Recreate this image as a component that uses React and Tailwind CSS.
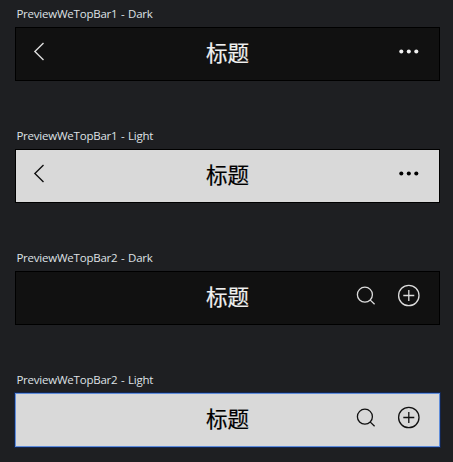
const themes = {
  dark: "bg-[#111111] text-[#dcdcdc] border-black",
  light: "bg-[#d9d9d9] text-[#111111] border-black",
  selected: "bg-[#d9d9d9] text-[#111111] border-[#5f8ddb] outline outline-[#14264f]",
};

const titles = {
  dark: "text-[#f0f0f0]",
  light: "text-black",
  selected: "text-black",
};

function Back() {
  return (
    <svg className="block h-6 w-6" viewBox="0 0 24 24" fill="none" stroke="currentColor" strokeWidth="1.4">
      <path d="M15.500 3 6.900 11.500l8.600 8.500" />
    </svg>
  );
}

function More() {
  return (
    <svg className="block h-6 w-6" viewBox="0 0 24 24" fill="currentColor">
      <circle cx="4.300" cy="11.500" r="2.050" />
      <circle cx="11.800" cy="11.500" r="2.050" />
      <circle cx="19.300" cy="11.500" r="2.050" />
    </svg>
  );
}

function Search() {
  return (
    <svg className="block h-6 w-6" viewBox="0 0 24 24" fill="none" stroke="currentColor" strokeWidth="1.3">
      <circle cx="10.900" cy="10.700" r="7.500" />
      <path d="m16.100 15.900 4.500 4.300" />
    </svg>
  );
}

function Add() {
  return (
    <svg className="block h-6 w-6" viewBox="0 0 24 24" fill="none" stroke="currentColor" strokeWidth="1.3">
      <circle cx="11.800" cy="11.500" r="10.200" />
      <path d="M11.800 6v11M6.300 11.500h11" />
    </svg>
  );
}

function Preview({ name, theme, second }) {
  return (
    <section className="h-[122px]">
      <h2 className="h-5 pl-[1.4px] text-[11.5px] leading-[14px] tracking-[-0.22px] [word-spacing:0.8px] whitespace-nowrap text-[#dfe1e5]">{name}</h2>
      <div className={`grid h-[54px] w-[425px] grid-cols-[1fr_auto_1fr] items-center border pr-[18px] pb-1 pl-3 ${themes[theme]}`}>
        <div>{!second && <Back />}</div>
        <div className={`pt-px pl-[6px] text-[21.5px] leading-6 [-webkit-text-stroke:0.2px_currentColor] ${titles[theme]}`}>标题</div>
        <div className={`flex justify-end gap-[19px] ${second ? "" : titles[theme]}`}>
          {second ? <><Search /><Add /></> : <More />}
        </div>
      </div>
    </section>
  );
}

export default function App() {
  return (
    <main className="h-[462px] w-[453px] overflow-hidden bg-[#1e1f22] pt-[7px] pl-[15px] font-['Open_Sans','Noto_Sans_CJK_SC',sans-serif]">
      <Preview name="PreviewWeTopBar1 - Dark" theme="dark" />
      <Preview name="PreviewWeTopBar1 - Light" theme="light" />
      <Preview name="PreviewWeTopBar2 - Dark" theme="dark" second />
      <Preview name="PreviewWeTopBar2 - Light" theme="selected" second />
    </main>
  );
}
